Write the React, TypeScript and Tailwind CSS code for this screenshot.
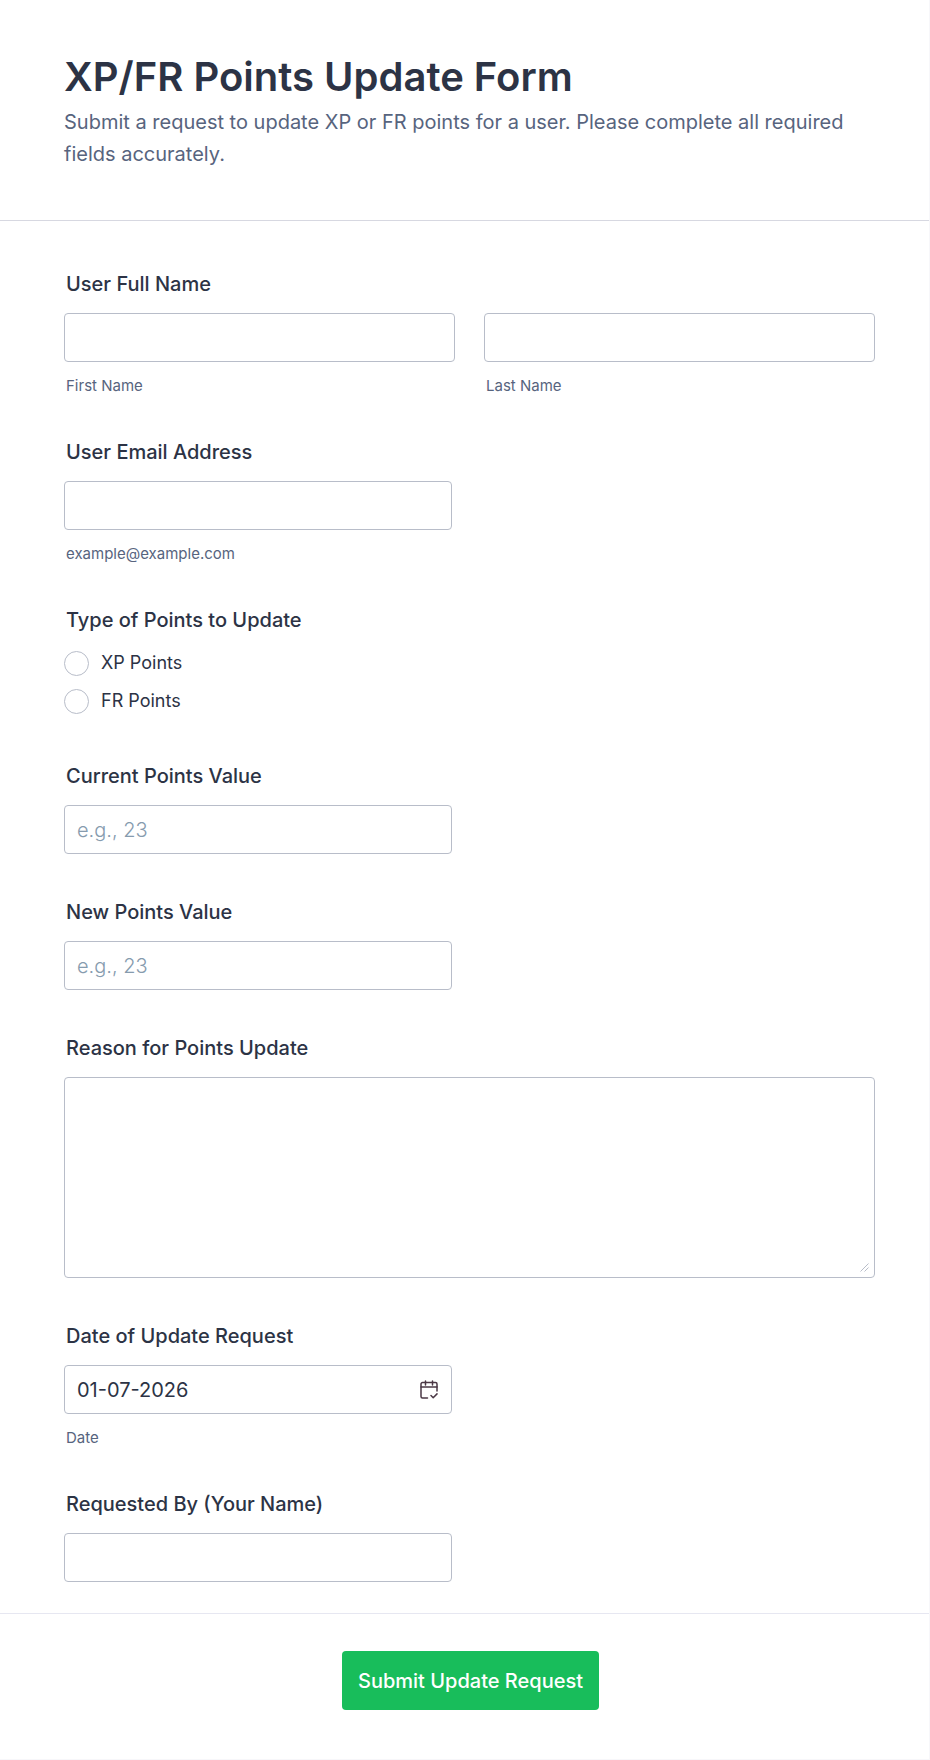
import { useState } from 'react'
import type { ReactNode } from 'react'

const inputClass =
  'block h-[49px] w-full rounded border border-[#b8bdc9] bg-white px-3 text-xl text-[#2c3345] outline-none placeholder:font-light placeholder:text-[#869bae] focus:border-blue-500'

export default function App() {
  const [date, setDate] = useState('01-07-2026')

  return (
    <form
      onSubmit={(e) => e.preventDefault()}
      className="border-r border-b border-[#f7f7fa] bg-white font-['Inter',sans-serif] text-[#2c3345]"
    >
      {/* Header */}
      <header className="border-b border-[#d7d8e1] pt-[53px] pr-[54px] pb-[50px] pl-16">
        <h1 className="text-[40px] leading-[48px] font-semibold">XP/FR Points Update Form</h1>
        <p className="mt-[5px] text-xl leading-8 text-[#57647e]">
          Submit a request to update XP or FR points for a user. Please complete all required fields
          accurately.
        </p>
      </header>

      {/* Fields */}
      <div className="flex flex-col gap-[45px] pt-[50px] pr-[54px] pb-[31px] pl-16">
        <fieldset>
          <Legend>User Full Name</Legend>
          <div className="grid grid-cols-2 gap-[29px]">
            <div>
              <input id="first" type="text" className={inputClass} />
              <SubLabel htmlFor="first">First Name</SubLabel>
            </div>
            <div>
              <input id="last" type="text" className={inputClass} />
              <SubLabel htmlFor="last">Last Name</SubLabel>
            </div>
          </div>
        </fieldset>

        <Field id="email" label="User Email Address" sub="example@example.com">
          <input id="email" type="email" className={inputClass} />
        </Field>

        <fieldset>
          <Legend>Type of Points to Update</Legend>
          <div className="flex flex-col gap-2.5 pb-[3px]">
            <RadioOption value="XP Points" />
            <RadioOption value="FR Points" />
          </div>
        </fieldset>

        <Field id="current" label="Current Points Value">
          <input id="current" type="text" inputMode="numeric" placeholder="e.g., 23" className={inputClass} />
        </Field>

        <Field id="new" label="New Points Value">
          <input id="new" type="text" inputMode="numeric" placeholder="e.g., 23" className={inputClass} />
        </Field>

        <Field id="reason" label="Reason for Points Update" wide>
          <div className="relative">
            <textarea
              id="reason"
              className="block h-[201px] w-full resize-none rounded border border-[#b8bdc9] bg-white px-3 py-2 text-xl outline-none focus:border-blue-500"
            />
            <svg
              className="pointer-events-none absolute right-1.5 bottom-1.5"
              width="9"
              height="9"
              viewBox="0 0 9 9"
              stroke="#b8bdc9"
              aria-hidden="true"
            >
              <path d="M0.5 8.5 8.5 0.5M4.5 8.5 8.5 4.5" />
            </svg>
          </div>
        </Field>

        <Field id="date" label="Date of Update Request" sub="Date">
          <div className="relative">
            <input
              id="date"
              type="text"
              value={date}
              onChange={(e) => setDate(e.target.value)}
              className={inputClass}
            />
            <button type="button" aria-label="Choose date" className="absolute inset-y-0 right-3.5 flex items-center">
              <CalendarIcon />
            </button>
          </div>
        </Field>

        <Field id="requester" label="Requested By (Your Name)">
          <input id="requester" type="text" className={inputClass} />
        </Field>
      </div>

      {/* Submit */}
      <footer className="flex justify-center border-t border-[#e6e7f1] pt-[37px] pr-[52px] pb-[49px] pl-16">
        <button type="submit" className="h-[59px] rounded bg-[#18bd5b] px-4 text-xl font-medium text-white">
          Submit Update Request
        </button>
      </footer>
    </form>
  )
}

function Legend({ children }: { children: ReactNode }) {
  return <legend className="mb-4 pl-0.5 text-xl leading-[26px] font-medium">{children}</legend>
}

function SubLabel({ htmlFor, children }: { htmlFor: string; children: ReactNode }) {
  return (
    <label htmlFor={htmlFor} className="mt-4 block pl-0.5 text-[15px] leading-4 text-[#57647e]">
      {children}
    </label>
  )
}

function Field({
  id,
  label,
  sub,
  wide = false,
  children,
}: {
  id: string
  label: string
  sub?: string
  wide?: boolean
  children: ReactNode
}) {
  return (
    <div className={wide ? 'w-full' : 'w-full max-w-[388px]'}>
      <label htmlFor={id} className="mb-4 block pl-0.5 text-xl leading-[26px] font-medium">
        {label}
      </label>
      {children}
      {sub && <SubLabel htmlFor={id}>{sub}</SubLabel>}
    </div>
  )
}

function RadioOption({ value }: { value: string }) {
  return (
    <label className="flex items-center gap-3 text-lg leading-7">
      <input
        type="radio"
        name="pointsType"
        value={value}
        className="size-[25px] appearance-none rounded-full border border-[#b8bdc9] bg-white checked:border-8 checked:border-blue-500"
      />
      {value}
    </label>
  )
}

function CalendarIcon() {
  return (
    <svg
      width="18"
      height="19"
      viewBox="0 0 18 19"
      fill="none"
      stroke="#4b3845"
      strokeWidth="1.5"
      strokeLinecap="round"
      strokeLinejoin="round"
      aria-hidden="true"
    >
      <path d="M7.500 18H2.500a1.500 1.500 0 0 1-1.500-1.500V4a1.500 1.500 0 0 1 1.500-1.500h13A1.500 1.500 0 0 1 17 4v7" />
      <path d="M1 7h16M5.500 1v4M12.500 1v4M11 15.500l2.200 2.200 3.800-3.800" />
    </svg>
  )
}
